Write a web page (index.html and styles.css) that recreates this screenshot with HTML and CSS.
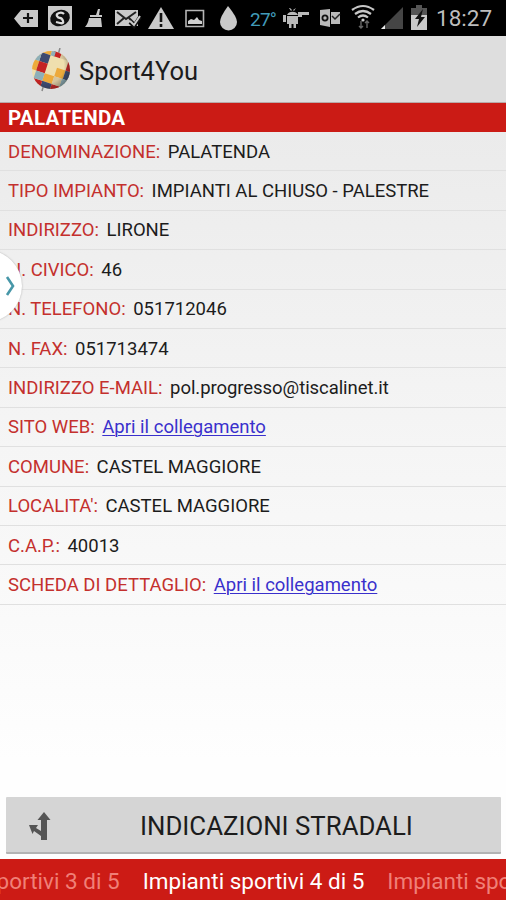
FILE: index.html
```html
<!DOCTYPE html>
<html lang="it">
<head>
<meta charset="utf-8">
<title>Sport4You</title>
<link rel="stylesheet" href="styles.css">
</head>
<body>
<div class="screen">
  <div class="status">
    <svg class="notifications" viewBox="0 0 248 36">
      <g fill="#c9c9c9">
        <path d="M14 18.500 21 10h17v17H21z"/>
        <path d="M48 6h24v24H48z"/>
        <path d="M98 9h2l-1 6h3v2H90v-2h6zM89 18h12l1 9H85q3-3 4-9z"/>
        <path d="M115 10h23v16h-23z"/>
        <path d="M161 7l13 22h-26z"/>
        <path d="M228 6q9 11 9 16a8.500 8.500 0 0 1-17 0q0-5 8-16z"/>
      </g>
      <path d="M28 13v10M23 18h10" stroke="#111" stroke-width="2.200"/>
      <ellipse cx="60" cy="18" rx="10" ry="8" fill="#111" transform="rotate(-20 60 18)"/>
      <path d="M64 14q-2-2-5-1t-2 3 3 2 3 3-3 2-4-1" fill="none" stroke="#ddd" stroke-width="2.300"/>
      <path d="M117 12l9 7 10-7M117 24l7-6M135 24l-6-6" fill="none" stroke="#222" stroke-width="2"/>
      <path d="M130 22l4 4 6-9" fill="none" stroke="#111" stroke-width="4"/>
      <path d="M130 21l4 4 6-9" fill="none" stroke="#ccc" stroke-width="2"/>
      <path d="M161 13v9M161 24v3" stroke="#111" stroke-width="2.600"/>
      <path d="M186 10.500h17.500v16H186z" fill="none" stroke="#b5b5b5" stroke-width="1.600"/>
      <path d="M188 24v-3l3-2 3 1 3-3 2 3 3 1v3z" fill="#d0d0d0"/>
    </svg>
    <span class="temperature">27°</span>
    <svg class="system" viewBox="280 0 154 36">
      <g fill="#b9b9b9">
        <path d="M287 15a6 5.500 0 0 1 11 0zM287 16h11v8h-2v4h-2.500v-4h-2v4H289v-4h-2zM283 15h3v7h-3zM298 12h11v3h-7v2h-4zM289 8l2 3 1-1-2-2zM296 8l-3 2 1 1z"/>
        <path d="M320 10l10-1v18l-10-2z"/>
        <path d="M331 12h9v12h-9z"/>
      </g>
      <circle cx="325" cy="18" r="2.600" fill="none" stroke="#111" stroke-width="1.800"/>
      <path d="M332 16l3 3 5-5" fill="none" stroke="#222" stroke-width="1.500"/>
      <g fill="none" stroke="#c7c7c7" stroke-width="2.200">
        <path d="M352 10q11-8 22 0M355 14q8-6 16 0M358 17.500q5-4 10 0"/>
      </g>
      <circle cx="363" cy="20" r="1.600" fill="#ccc"/>
      <path d="M361 21v7m-2-2 2 2 2-2M367 28v-7m-2 2 2-2 2 2" fill="none" stroke="#666" stroke-width="1.400"/>
      <path d="M403 7v22h-22z" fill="#454545"/>
      <path d="M385 25v4h-4z" fill="#eee"/>
      <path d="M416 5h6v3h5v8h-16V8h5z" fill="#555"/>
      <path d="M411 15h16v15h-16z" fill="#c8c8c8"/>
      <path d="M423 9l-8 10h4l-2 8 8-10h-4z" fill="#111"/>
    </svg>
    <span class="clock">18:27</span>
  </div>
  <div class="appbar">
    <svg class="logo" viewBox="0 0 42 44">
      <defs>
        <clipPath id="ball"><circle cx="21" cy="22" r="19"/></clipPath>
        <radialGradient id="shade" cx=".4" cy=".4" r=".62"><stop offset=".65" stop-color="#222" stop-opacity="0"/><stop offset="1" stop-color="#222" stop-opacity=".45"/></radialGradient>
      </defs>
      <path d="M30 0l-2 7M12 43l2-7" stroke="#888" stroke-width="1.500"/>
      <g clip-path="url(#ball)">
        <path fill="#efdfae" d="M0 0h42v44H0z"/>
        <g transform="translate(21 22) rotate(18)">
          <path fill="#edaa3b" d="M-23-5h9v10h-9zM5-4h9v9H5zM-5 5h10v8H-5zM-14-21h9v7h-9z"/>
          <path fill="#3d4a70" d="M-14-14h9v9h-9zM14-4h8v9h-8zM-5 13H5v8H-5z"/>
          <path fill="#c52323" d="M-14-5h9v10h-9zM-3-21h8v7h-8zM14-13h8v9h-8zM5 13h8v8H5zM-14 13h9v8h-9z"/>
          <path fill="#8eafb8" d="M-14 5h9v8h-9zM-22-14h8v9h-8zM13 5h8v9h-8zM-5-22h4v8h-4z"/>
          <path fill="#d6c59d" d="M5 5h8v8H5zM5-20h8v6H5z"/>
        </g>
        <path fill="url(#shade)" d="M0 0h42v44H0z"/>
      </g>
    </svg>
    <span class="app-title">Sport4You</span>
  </div>
  <div class="section"><span>PALATENDA</span></div>
  <div class="details">
    <div class="row"><span class="label">DENOMINAZIONE:</span><span class="value">PALATENDA</span></div>
    <div class="row"><span class="label">TIPO IMPIANTO:</span><span class="value">IMPIANTI AL CHIUSO - PALESTRE</span></div>
    <div class="row"><span class="label">INDIRIZZO:</span><span class="value">LIRONE</span></div>
    <div class="row"><span class="label">N. CIVICO:</span><span class="value">46</span></div>
    <div class="row"><span class="label">N. TELEFONO:</span><span class="value">051712046</span></div>
    <div class="row"><span class="label">N. FAX:</span><span class="value">051713474</span></div>
    <div class="row"><span class="label">INDIRIZZO E-MAIL:</span><span class="value email">pol.progresso@tiscalinet.it</span></div>
    <div class="row"><span class="label">SITO WEB:</span><a class="value link">Apri il collegamento</a></div>
    <div class="row"><span class="label">COMUNE:</span><span class="value">CASTEL MAGGIORE</span></div>
    <div class="row"><span class="label">LOCALITA':</span><span class="value">CASTEL MAGGIORE</span></div>
    <div class="row"><span class="label">C.A.P.:</span><span class="value">40013</span></div>
    <div class="row"><span class="label">SCHEDA DI DETTAGLIO:</span><a class="value link">Apri il collegamento</a></div>
  </div>
  <div class="directions">
    <svg class="fork" viewBox="0 0 24 30"><path d="M16 1l6.500 8H19v20h-6v-4L6 20l-1.500 3L1 14h9l-2 3 5 3V9H9.500z" fill="#555"/></svg>
    <span class="directions-text">INDICAZIONI STRADALI</span>
  </div>
  <div class="pager">
    <span class="page previous">Impianti sportivi 3 di 5</span>
    <span class="page current">Impianti sportivi 4 di 5</span>
    <span class="page next">Impianti sportivi 5 di 5</span>
  </div>
  <div class="handle"><svg viewBox="0 0 12 22"><path d="M2 2l6 9-6 9" fill="none" stroke="#4797a8" stroke-width="2.600"/></svg></div>
</div>
</body>
</html>
```

FILE: styles.css
```css
* { box-sizing: border-box; }
body { margin: 0; font-family: Roboto, "Liberation Sans", sans-serif; color: #1c1c1c; }
.screen { position: relative; width: 506px; height: 900px; overflow: hidden; display: flex; flex-direction: column; background: linear-gradient(#ebebeb 130px, #f6f6f6 480px, #fefefe 760px); }
.status { height: 36px; flex: none; display: flex; align-items: center; background: #000; white-space: nowrap; }
.notifications { width: 248px; height: 36px; flex: none; }
.temperature { width: 32px; padding: 2px 0 0 2px; flex: none; font-size: 19px; letter-spacing: -0.8px; color: #419bb9; }
.system { width: 154px; height: 36px; flex: none; }
.clock { margin-left: 2px; font-size: 22.500px; color: #bdbdbd; }
.appbar { height: 67px; flex: none; display: flex; align-items: center; padding: 2px 0 0 30px; background: #dedede; border-bottom: 1px solid #b9aaa8; }
.logo { width: 42px; height: 44px; margin-right: 7px; }
.app-title { padding-top: 2px; font-size: 25.500px; line-height: 30px; }
.section { height: 29px; flex: none; padding-left: 8px; background: #cb1b15; color: #fff; font-size: 20.500px; font-weight: 700; letter-spacing: 0.3px; line-height: 31px; }
.details { flex: none; }
.row { display: flex; align-items: center; gap: 7.5px; height: 39.4px; padding: 1px 0 0 8px; border-bottom: 1px solid #e0e0e0; font-size: 18.500px; white-space: nowrap; }
.label { color: #c4302d; }
.email { letter-spacing: -0.06px; }
.link { color: #3a30cc; text-decoration: underline; text-decoration-thickness: 1px; text-underline-offset: 2px; }
.directions { display: flex; align-items: center; flex: none; height: 57px; margin: auto 5px 5px 6px; padding: 2px 0 0 22px; background: #d5d5d5; border-bottom: 2px solid #b3b3b3; border-radius: 1px; }
.fork { width: 24px; height: 30px; margin-right: 88px; }
.directions-text { font-size: 25.8px; white-space: nowrap; }
.pager { height: 41px; flex: none; display: flex; justify-content: center; align-items: center; gap: 23px; padding: 2px 0 0 1px; background: #cc1b15; white-space: nowrap; font-size: 22.500px; color: #f08078; }
.page { flex: none; }
.current { color: #fff; }
.handle { position: absolute; left: -50px; top: 250px; width: 72px; height: 72px; border-radius: 50%; background: #fff; box-shadow: 0 0 2px #aaa; display: flex; align-items: center; padding-left: 55px; }
.handle svg { width: 12px; height: 22px; }
```
